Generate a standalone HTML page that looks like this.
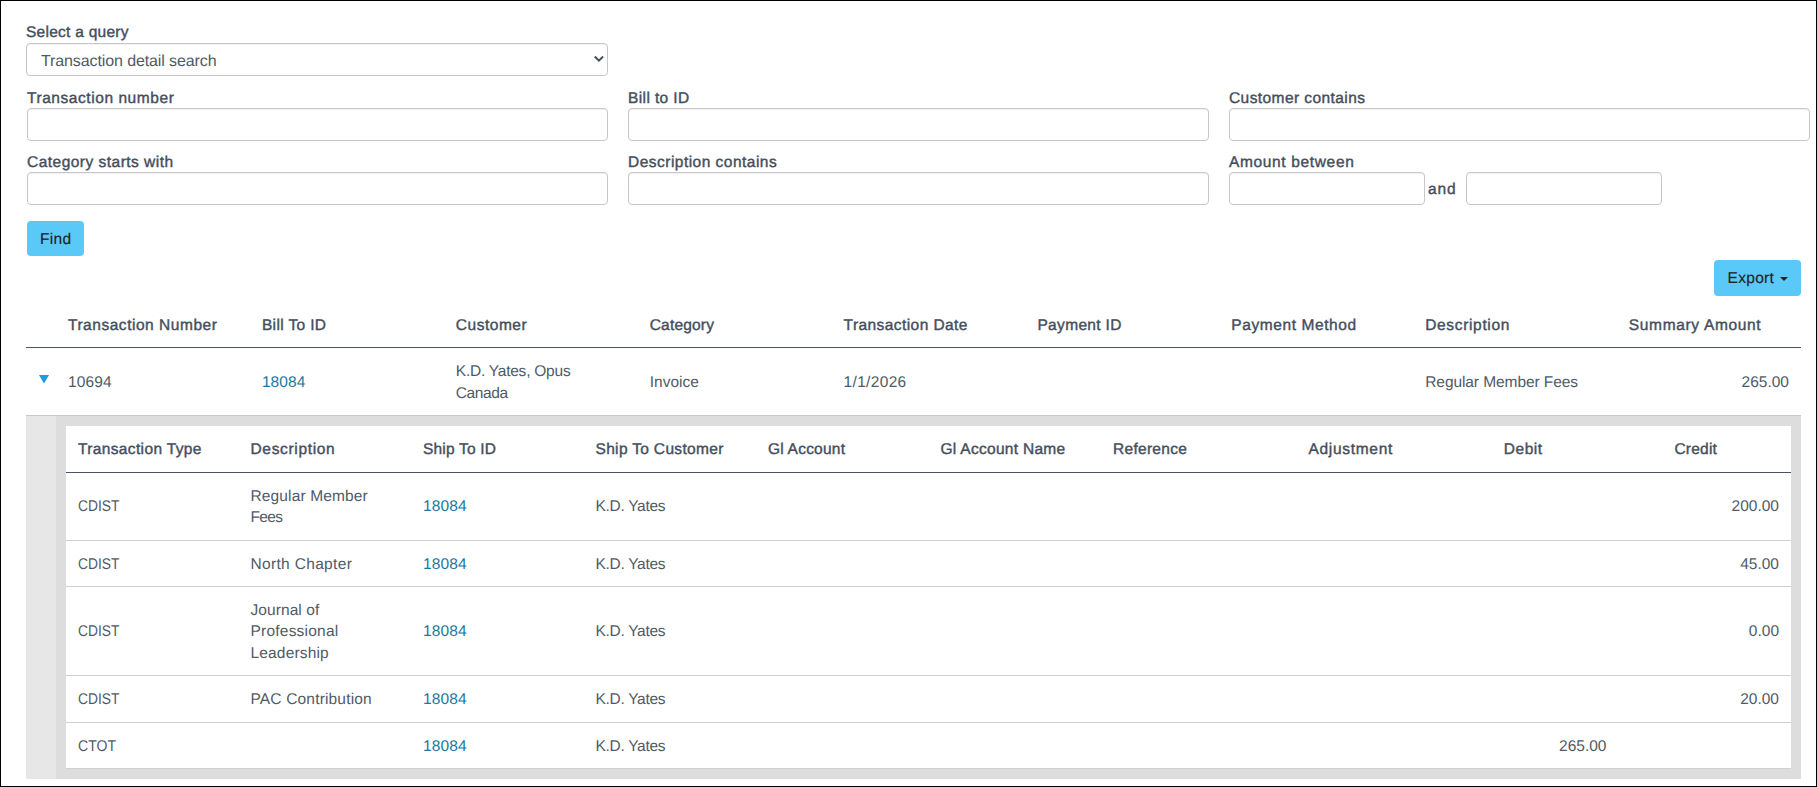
<!DOCTYPE html>
<html lang="en">
<head>
<meta charset="utf-8">
<title>Transaction detail search</title>
<style>
html,body{margin:0;padding:0;}
body{width:1817px;height:787px;position:relative;overflow:hidden;background:#fff;
  font-family:"Liberation Sans",sans-serif;font-size:15.5px;line-height:21.43px;color:#505a66;text-rendering:geometricPrecision;}
*{box-sizing:border-box;}
.frame{position:absolute;left:0;top:0;width:1817px;height:787px;border:1px solid #000;pointer-events:none;z-index:10;}
.sb{font-weight:normal;color:#444e5c;-webkit-text-stroke:0.4px #444e5c;}
.lbl{position:absolute;display:block;margin:0;white-space:nowrap;height:21px;line-height:21px;}
.inp{position:absolute;display:block;margin:0;padding:0 12px;outline:none;font:inherit;color:inherit;height:33px;border:1px solid #c7c7c7;border-radius:4px;background:#fff;box-shadow:inset 0 1px 1px rgba(0,0,0,.06);}
.sel{-webkit-appearance:none;appearance:none;display:block;margin:0;padding:4px 0 0 14px;outline:none;font:inherit;font-size:16px;line-height:21px;color:#505a66;text-rendering:inherit;position:absolute;left:26px;top:43px;width:582px;height:33px;border:1px solid #c7c7c7;border-radius:4px;background:#fff;box-shadow:inset 0 1px 1px rgba(0,0,0,.06);}
.sel .txt{position:absolute;left:14px;top:7px;font-size:16px;line-height:21px;color:#505a66;white-space:nowrap;}
.chev{position:absolute;left:593px;top:55px;}
.btn{position:absolute;display:block;margin:0;padding:0;border:0;font:inherit;text-rendering:inherit;text-align:left;background:#5bc9f7;border-radius:4px;color:#222;white-space:nowrap;}
.btn .txt{position:absolute;display:block;height:21px;line-height:21px;-webkit-text-stroke:0.15px #222;}
table{border-collapse:separate;border-spacing:0;table-layout:fixed;}
th{text-align:left;white-space:nowrap;}
a{color:#19799f;text-decoration:none;}
#outer{position:absolute;left:26px;top:301px;width:1775px;}
#outer>thead>tr>th{height:47px;padding:4px 12px 0;border-bottom:1px solid #4a5361;vertical-align:middle;}
#outer>tbody>tr>td{height:67px;padding:2.4px 12px 0;vertical-align:middle;}
.num{text-align:right;}
th.ctr{text-align:center;padding-right:30px !important;}
#detail{position:absolute;left:26px;top:415px;width:1775px;height:364px;background:#dddddd;border-top:1px solid #c9c9c9;}
#detail .side{position:absolute;left:0;top:0;width:30px;height:363px;background:#e7e7e7;}
#inner{position:absolute;left:40px;top:10px;width:1725px;background:#fff;}
#inner th{height:47px;padding:2px 12px 0;border-bottom:1px solid #4a5361;vertical-align:middle;}
#inner td{padding:0 12px;border-bottom:1px solid #d0d0d0;vertical-align:middle;}
#inner tr.s td{padding-top:1.2px;}
#inner tr.s2 td{padding-top:2.2px;}
#inner tr.s td.d3{padding-top:2.2px;}
#inner td.d2{padding-top:1px;}
</style>
</head>
<body>
<label class="lbl sb" style="left:26px;top:22px;"><span style="letter-spacing:0.26px;">Select a query</span></label>
<select class="sel" style="letter-spacing:-0.11px;"><option selected>Transaction detail search</option></select>
<svg class="chev" width="12" height="9" viewBox="0 0 12 9"><path d="M1.75 1.5 L5.93 5.7 L10.1 1.5" fill="none" stroke="#464f5d" stroke-width="2"/></svg>
<label class="lbl sb" style="left:27px;top:88px;"><span style="letter-spacing:0.56px;">Transaction number</span></label>
<input type="text" class="inp" style="left:27px;top:108px;width:581px;">
<label class="lbl sb" style="left:628px;top:88px;"><span style="letter-spacing:0.39px;">Bill to ID</span></label>
<input type="text" class="inp" style="left:628px;top:108px;width:581px;">
<label class="lbl sb" style="left:1229px;top:88px;"><span style="letter-spacing:0.42px;">Customer contains</span></label>
<input type="text" class="inp" style="left:1229px;top:108px;width:581px;">
<label class="lbl sb" style="left:27px;top:152px;"><span style="letter-spacing:0.48px;">Category starts with</span></label>
<input type="text" class="inp" style="left:27px;top:172px;width:581px;">
<label class="lbl sb" style="left:628px;top:152px;"><span style="letter-spacing:0.48px;">Description contains</span></label>
<input type="text" class="inp" style="left:628px;top:172px;width:581px;">
<label class="lbl sb" style="left:1229px;top:152px;"><span style="letter-spacing:0.65px;">Amount between</span></label>
<input type="text" class="inp" style="left:1229px;top:172px;width:196px;">
<label class="lbl sb" style="left:1428px;top:179px;"><span style="letter-spacing:0.85px;">and</span></label>
<input type="text" class="inp" style="left:1466px;top:172px;width:196px;">
<button type="button" class="btn" style="left:27px;top:221px;width:57px;height:35px;"><span class="txt" style="left:13px;top:8px;"><span style="letter-spacing:0.33px;">Find</span></span></button>
<button type="button" class="btn" style="left:1714px;top:260px;width:87px;height:36px;"><span class="txt" style="left:13.6px;top:8px;"><span style="letter-spacing:0.30px;">Export</span></span>
<svg width="8" height="4" viewBox="0 0 8 4" style="position:absolute;left:66px;top:17px;"><path d="M0 0 H8 L4 4 Z" fill="#222"/></svg></button>
<table id="outer">
<colgroup><col style="width:30px"><col style="width:193.9px"><col style="width:193.9px"><col style="width:193.9px"><col style="width:193.9px"><col style="width:193.9px"><col style="width:193.9px"><col style="width:193.9px"><col style="width:193.9px"><col></colgroup>
<thead><tr>
<th></th>
<th class="sb"><span style="letter-spacing:0.53px;">Transaction Number</span></th>
<th class="sb"><span style="letter-spacing:0.36px;">Bill To ID</span></th>
<th class="sb"><span style="letter-spacing:0.53px;">Customer</span></th>
<th class="sb"><span style="letter-spacing:0.20px;">Category</span></th>
<th class="sb"><span style="letter-spacing:0.43px;">Transaction Date</span></th>
<th class="sb"><span style="letter-spacing:0.33px;">Payment ID</span></th>
<th class="sb"><span style="letter-spacing:0.58px;">Payment Method</span></th>
<th class="sb"><span style="letter-spacing:0.66px;">Description</span></th>
<th class="sb ctr"><span style="letter-spacing:0.67px;">Summary Amount</span></th>

</tr></thead>
<tbody><tr>
<td style="padding:0;position:relative;"><svg width="10" height="8" viewBox="0 0 10 8" style="position:absolute;left:13px;top:27px;overflow:visible"><path d="M0 0 H10 L5 8.4 Z" fill="#219bdc"/></svg></td>
<td><span style="letter-spacing:0.10px;">10694</span></td><td><a><span style="letter-spacing:0.10px;">18084</span></a></td><td><span style="letter-spacing:-0.23px;">K.D. Yates, Opus</span><br><span style="letter-spacing:-0.40px;">Canada</span></td><td><span style="letter-spacing:0.03px;">Invoice</span></td><td><span style="letter-spacing:0.33px;">1/1/2026</span></td><td></td><td></td><td><span style="letter-spacing:-0.08px;">Regular Member Fees</span></td><td class="num">265.00</td>
</tr></tbody>
</table>
<div id="detail"><div class="side"></div>
<table id="inner">
<colgroup><col style="width:172.5px"><col style="width:172.5px"><col style="width:172.5px"><col style="width:172.5px"><col style="width:172.5px"><col style="width:172.5px"><col style="width:172.5px"><col style="width:172.5px"><col style="width:172.5px"><col></colgroup>
<thead><tr>
<th class="sb"><span style="letter-spacing:0.36px;">Transaction Type</span></th>
<th class="sb"><span style="letter-spacing:0.66px;">Description</span></th>
<th class="sb"><span style="letter-spacing:0.19px;">Ship To ID</span></th>
<th class="sb"><span style="letter-spacing:0.33px;">Ship To Customer</span></th>
<th class="sb"><span style="letter-spacing:0.22px;">Gl Account</span></th>
<th class="sb"><span style="letter-spacing:0.29px;">Gl Account Name</span></th>
<th class="sb"><span style="letter-spacing:0.29px;">Reference</span></th>
<th class="sb ctr"><span style="letter-spacing:0.70px;">Adjustment</span></th>
<th class="sb ctr"><span style="letter-spacing:0.53px;">Debit</span></th>
<th class="sb ctr"><span style="letter-spacing:0.22px;">Credit</span></th>

</tr></thead>
<tbody>
<tr style="height:68px"><td><span style="display:inline-block;transform:scaleX(0.891);transform-origin:0 50%;">CDIST</span></td><td class="d2"><span style="letter-spacing:0.13px;">Regular Member</span><br><span style="letter-spacing:-0.67px;">Fees</span></td><td><a><span style="letter-spacing:0.10px;">18084</span></a></td><td><span style="letter-spacing:-0.30px;">K.D. Yates</span></td><td></td><td></td><td></td><td></td><td class="num"></td><td class="num">200.00</td></tr>
<tr class="s2" style="height:46px"><td><span style="display:inline-block;transform:scaleX(0.891);transform-origin:0 50%;">CDIST</span></td><td><span style="letter-spacing:0.33px;">North Chapter</span></td><td><a><span style="letter-spacing:0.10px;">18084</span></a></td><td><span style="letter-spacing:-0.30px;">K.D. Yates</span></td><td></td><td></td><td></td><td></td><td class="num"></td><td class="num">45.00</td></tr>
<tr class="s" style="height:89px"><td><span style="display:inline-block;transform:scaleX(0.891);transform-origin:0 50%;">CDIST</span></td><td class="d3"><span style="letter-spacing:0.08px;">Journal of</span><br><span style="letter-spacing:0.22px;">Professional</span><br><span style="letter-spacing:0.17px;">Leadership</span></td><td><a><span style="letter-spacing:0.10px;">18084</span></a></td><td><span style="letter-spacing:-0.30px;">K.D. Yates</span></td><td></td><td></td><td></td><td></td><td class="num"></td><td class="num">0.00</td></tr>
<tr class="s" style="height:47px"><td><span style="display:inline-block;transform:scaleX(0.891);transform-origin:0 50%;">CDIST</span></td><td><span style="letter-spacing:0.17px;">PAC Contribution</span></td><td><a><span style="letter-spacing:0.10px;">18084</span></a></td><td><span style="letter-spacing:-0.30px;">K.D. Yates</span></td><td></td><td></td><td></td><td></td><td class="num"></td><td class="num">20.00</td></tr>
<tr class="s2" style="height:46px"><td><span style="display:inline-block;transform:scaleX(0.906);transform-origin:0 50%;">CTOT</span></td><td></td><td><a><span style="letter-spacing:0.10px;">18084</span></a></td><td><span style="letter-spacing:-0.30px;">K.D. Yates</span></td><td></td><td></td><td></td><td></td><td class="num">265.00</td><td class="num"></td></tr>
</tbody>
</table>
</div>

<div class="frame"></div>
</body>
</html>
